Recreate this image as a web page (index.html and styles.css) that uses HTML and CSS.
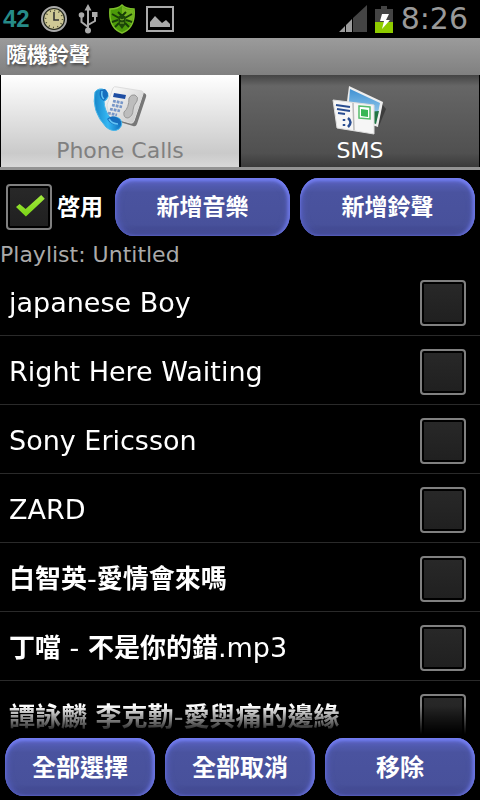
FILE: index.html
```html
<!DOCTYPE html>
<html lang="zh-Hant">
<head>
    <meta charset="UTF-8">
    <meta name="viewport" content="width=device-width, initial-scale=1.0">
    <title>隨機鈴聲</title>
    <link rel="stylesheet" href="styles.css">
</head>
<body>
    <div class="status-bar">
        <div class="status-icons">
            <span class="battery-level">42</span>
            <svg class="icon-clock" width="28" height="28" viewBox="0 0 28 28">
                <circle cx="14" cy="14" r="12" fill="#cfc995" stroke="#aaa" stroke-width="2"/>
                <circle cx="14" cy="14" r="10.5" fill="none" stroke="#20251f" stroke-width="1.2"/>
                <circle cx="14" cy="14" r="8.5" fill="none" stroke="#4c4a36" stroke-width="1.6" stroke-dasharray="1 3.45"/>
                <path d="M14 7v8h5" fill="none" stroke="#333" stroke-width="1.6"/>
            </svg>
            <svg class="icon-usb" width="20" height="30" viewBox="0 0 20 30">
                <g fill="none" stroke="#aaa" stroke-width="2">
                    <path d="M10 4v22M10 23L3.500 18V12M10 21l7-4V9"/>
                </g>
                <path d="M10 0l3.500 6.500h-7zM14 8h5.500v5H14z" fill="#aaa"/>
                <circle cx="3.500" cy="11" r="2.800" fill="#aaa"/>
                <circle cx="10" cy="26.500" r="3" fill="#aaa"/>
            </svg>
            <svg class="icon-shield" width="28" height="30" viewBox="0 0 28 30">
                <path d="M14 1c3 3 7 4 12 4 1 11-1 20-12 24C3 25 1 16 2 5c5 0 9-1 12-4z" fill="#4c9b09" stroke="#7dbf2a" stroke-width="1.500"/>
                <path d="M14 2c3 3 6 4 11 4 1 5 0 10-2 14L14 14z" fill="#75b51f"/>
                <g fill="none" stroke="#173d08" stroke-width="2">
                    <path d="M10 8l3 3h2l3-3M4 10l7 4M24 10l-7 4M4 18l6-2M24 18l-6-2M7 23l4-4M21 23l-4-4"/>
                </g>
                <path d="M14 10l4 3-1 8-3 4-3-4-1-8z" fill="#1d4709"/>
                <path d="M12 15l2 1 2-1M12 19h4" fill="none" stroke="#7cb72c"/>
            </svg>
            <svg class="icon-picture" width="28" height="26" viewBox="0 0 28 26">
                <path d="M1 1h26v24H1z" fill="none" stroke="#aaa" stroke-width="2"/>
                <path d="M4 21v-5l5-6 5 5 2 2 4-3 4 4v3z" fill="#aaa"/>
            </svg>
        </div>
        <div class="status-right">
            <svg width="28" height="28" viewBox="0 0 28 28">
                <path d="M0 27L6 21v6zM7 20l6-6v13H7z" fill="#9b9b9b"/>
                <path d="M14 13L28 0v27H14z" fill="#444"/>
            </svg>
            <svg width="18" height="28" viewBox="0 0 18 28">
                <path d="M0 4h6V1h6v3h6v13H0z" fill="#444"/>
                <path d="M0 17h18v11H0z" fill="#8fcc00"/>
                <path d="M7 9h7l-3 6h4L7 24l2-8H5z" fill="#fff"/>
            </svg>
            <span class="clock">8:26</span>
        </div>
    </div>

    <header class="title-bar">
        <h1>隨機鈴聲</h1>
    </header>

    <nav class="tabs">
        <button type="button" class="tab active">
            <svg width="56" height="50" viewBox="0 0 56 50">
                <defs>
                    <linearGradient id="phoneBody" x1="0" y1="0" x2="1" y2="1">
                        <stop offset="0" stop-color="#fff"/>
                        <stop offset="1" stop-color="#c4c4c4"/>
                    </linearGradient>
                    <linearGradient id="handset" x1="0" y1="0" x2="1" y2="0">
                        <stop offset="0" stop-color="#1786c9"/>
                        <stop offset="0.500" stop-color="#35b7f3"/>
                        <stop offset="1" stop-color="#0d6dbd"/>
                    </linearGradient>
                </defs>
                <path d="M23 4l29 4q3 1 2 4l-9 27q-1 3-4 2l-20-6z" fill="#777"/>
                <path d="M21 3q1-2 4-1l25 4q2 1 1 3l-9 27q-1 3-4 2L17 32l-2-12z" fill="url(#phoneBody)" stroke="#ddd"/>
                <path d="M22 8l12 2-1 4-12-2z" fill="#1d4da3"/>
                <path d="M21 16l10 2M20 20l10 2M18 24l10 2M16 28l9 2" stroke="#7796c8" stroke-width="2.800" stroke-dasharray="2.800 1"/>
                <path d="M37 13q2-4 6-3 4 2 2 6-4 5-4 9 0 6-5 8-5 0-4-6 5-4 5-14z" fill="#bdbdbd" stroke="#999"/>
                <path d="M3 7q4-5 10-2 4 3 3 7-2 4-4 4 0 9 7 18 4-4 9 0 4 5-1 10-6 4-13-2Q-1 26 3 7z" fill="url(#handset)" stroke="#48b5e8"/>
                <path d="M8 5q-2 8 4 11l4-5q0-5-3-7zM15 34q4-4 9-2 5 2 5 7-9 3-14-5z" fill="#176fbf"/>
                <path d="M10 6q-1 6 2 8M17 34q3 5 9 5" fill="none" stroke="#63c4f5" stroke-width="1.500"/>
            </svg>
            <span>Phone Calls</span>
        </button>
        <button type="button" class="tab">
            <svg width="56" height="50" viewBox="0 0 56 50">
                <defs>
                    <linearGradient id="sky" x1="0" y1="0" x2="0" y2="1">
                        <stop offset="0" stop-color="#3f91d3"/>
                        <stop offset="1" stop-color="#b4def5"/>
                    </linearGradient>
                </defs>
                <path d="M43 42l7-23 4 5-7 17z" fill="#3d3d3d"/>
                <path d="M17 1l34 16-5 25-33-10z" fill="#eee"/>
                <path d="M18 4l30 14-4 20-28-9z" fill="url(#sky)"/>
                <path d="M35 27l12-1-3 13-10-3z" fill="#217544"/>
                <path d="M1 15l41 5v29L5 43z" fill="#f6f6f6" stroke="#ddd"/>
                <path d="M21 18l1 27" stroke="#bbb" stroke-width="1.500"/>
                <path d="M4 20l14 2M5 24l13 2M6 28l7 1" stroke="#294d91" stroke-width="2.200"/>
                <path d="M12 34v2M12 39v2M16 33q5 4 0 9" fill="none" stroke="#294d91" stroke-width="2.500"/>
                <path d="M27 21l11 1v12l-11-1z" fill="#fff" stroke="#55bd6c" stroke-width="1.500"/>
                <path d="M29 24l7 1v7l-7-1z" fill="#36b654"/>
            </svg>
            <span>SMS</span>
        </button>
    </nav>

    <main>
        <div class="controls">
            <label class="enable">
                <input type="checkbox" class="check" checked>
                <span>啓用</span>
            </label>
            <button type="button" class="btn">新增音樂</button>
            <button type="button" class="btn">新增鈴聲</button>
        </div>

        <p class="playlist-name">Playlist: Untitled</p>

        <ul class="song-list">
            <li><label><span>japanese Boy</span><input type="checkbox" class="check"></label></li>
            <li><label><span>Right Here Waiting</span><input type="checkbox" class="check"></label></li>
            <li><label><span>Sony Ericsson</span><input type="checkbox" class="check"></label></li>
            <li><label><span>ZARD</span><input type="checkbox" class="check"></label></li>
            <li><label><span><b>白智英</b>-<b>愛情會來嗎</b></span><input type="checkbox" class="check"></label></li>
            <li><label><span><b>丁噹</b> - <b>不是你的錯</b>.mp3</span><input type="checkbox" class="check"></label></li>
            <li><label><span><b>譚詠麟</b> <b>李克勤</b>-<b>愛與痛的邊緣</b></span><input type="checkbox" class="check"></label></li>
        </ul>
    </main>

    <footer class="actions">
        <button type="button" class="btn">全部選擇</button>
        <button type="button" class="btn">全部取消</button>
        <button type="button" class="btn">移除</button>
    </footer>
</body>
</html>
```
FILE: styles.css
```css
* {
    box-sizing: border-box;
}
body {
    font-family: "DejaVu Sans", "Noto Sans CJK TC", sans-serif;
    margin: 0;
    height: 100vh;
    display: flex;
    flex-direction: column;
    background: #000;
    color: #fff;
    overflow: hidden;
}
button {
    font-family: inherit;
    border: none;
    padding: 0;
    cursor: pointer;
}

/* Status bar */
.status-bar {
    display: flex;
    justify-content: space-between;
    align-items: center;
    height: 38px;
    flex-shrink: 0;
    padding: 0 12px 0 3px;
}
.status-icons,
.status-right {
    display: flex;
    align-items: center;
}
.status-icons {
    gap: 10px;
}
.status-right {
    gap: 8px;
}
.battery-level {
    font-family: "Liberation Sans", sans-serif;
    font-size: 24px;
    line-height: 30px;
    font-weight: bold;
    color: #268b88;
}
.clock {
    font-size: 30px;
    line-height: 36px;
    color: #999;
}

/* Title */
.title-bar {
    height: 37px;
    flex-shrink: 0;
    padding: 0 6px;
    background: linear-gradient(#9b9b9b, #808080);
}
.title-bar h1 {
    margin: 0;
    font-family: "Noto Sans CJK TC", sans-serif;
    font-size: 21px;
    line-height: 31px;
    text-shadow: 1px 2px 3px #444;
}

/* Tabs */
.tabs {
    display: flex;
    flex-shrink: 0;
    border-bottom: 3px solid #939393;
}
.tab {
    flex: 1;
    display: flex;
    flex-direction: column;
    align-items: center;
    height: 92px;
    padding-top: 10px;
    border: 1px solid #000;
    border-width: 0 1px;
    font-size: 22px;
    line-height: 24px;
    color: #fff;
    background: linear-gradient(#444, #666 12%, #505050 85%, #3a3a3a);
}
.tab span {
    margin-top: 4px;
}
.tab.active {
    color: #808080;
    background: linear-gradient(#fff, #cacaca 85%, #d8d8d8);
}

main {
    flex: 1;
    min-height: 0;
    display: flex;
    flex-direction: column;
}

/* Glossy buttons */
.btn {
    flex: 1;
    height: 58px;
    padding-bottom: 4px;
    border-radius: 18px / 22px;
    color: #fff;
    font-family: "Noto Sans CJK TC", sans-serif;
    font-size: 23px;
    font-weight: bold;
    background: linear-gradient(#5a64c2, #4a539f 25%, #48519b 80%, #3c4285);
    box-shadow: inset 0 3px 3px #737df0, inset -3px 0 3px #6670d8, inset 3px 0 3px #505ab4, inset 0 -3px 3px #454b95, inset 0 0 6px 3px rgba(100, 110, 210, 0.4);
}

/* Checkboxes */
.check {
    appearance: none;
    flex-shrink: 0;
    width: 46px;
    height: 46px;
    margin: 0;
    padding: 2px;
    border: 2px solid #808080;
    border-radius: 4px;
    background: linear-gradient(#282828, #202020) content-box;
}
.check:checked::before {
    content: '';
    display: block;
    width: 30px;
    height: 24px;
    margin: 7px 6px;
    background: linear-gradient(#a4ea3e, #74cf11);
    clip-path: polygon(0 50%, 12% 38%, 32% 58%, 84% 0, 96% 16%, 33% 90%);
}

.controls {
    display: flex;
    align-items: center;
    gap: 10px;
    padding: 8px 5px 6px 6px;
}
.enable {
    display: flex;
    align-items: center;
    gap: 5px;
    margin-right: 2px;
    font-family: "Noto Sans CJK TC", sans-serif;
    font-size: 23px;
    line-height: 34px;
    font-weight: bold;
}
.enable span {
    padding-bottom: 4px;
}
.playlist-name {
    margin: 0;
    font-size: 22px;
    line-height: 25px;
    color: #aaa;
}

/* Song list, fades out above the action buttons */
.song-list {
    list-style: none;
    margin: 0;
    padding: 0;
    flex: 1;
    min-height: 0;
    overflow: hidden;
    -webkit-mask-image: linear-gradient(to top, transparent, #000 28px);
    mask-image: linear-gradient(to top, transparent, #000 28px);
}
.song-list li {
    border-bottom: 1px solid #2a2a2a;
}
.song-list label {
    display: flex;
    align-items: center;
    justify-content: space-between;
    height: 68px;
    padding: 4px 14px 0 9px;
    font-size: 27px;
    line-height: 36px;
}
.song-list b {
    font-size: 26px;
}

.actions {
    display: flex;
    gap: 10px;
    flex-shrink: 0;
    padding: 4px 5px;
}
.actions .btn {
    font-size: 24px;
}
```
